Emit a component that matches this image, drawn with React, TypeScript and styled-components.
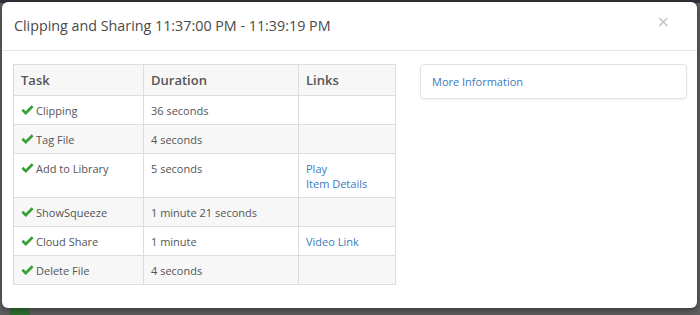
import React from "react";
import styled, { createGlobalStyle } from "styled-components";

const Global = createGlobalStyle`
  html, body { margin: 0; padding: 0; }
  body {
    width: 700px;
    height: 315px;
    overflow: hidden;
    background: #5b5b5b;
    font-family: "Open Sans", "Liberation Sans", Arial, sans-serif;
    color: #333;
  }
`;

const Backdrop = styled.div`
  position: relative;
  width: 700px;
  height: 315px;
  overflow: hidden;
  background: linear-gradient(#2e3238 0, #2e3238 3px, #5e5e5e 3px);
`;

const BehindIcon = styled.span`
  position: absolute;
  left: 10px;
  top: 308px;
  width: 20px;
  height: 14px;
  background: #2f6f32;
  border-radius: 3px;
`;

const Modal = styled.div`
  position: absolute;
  left: 2px;
  top: 2px;
  width: 695px;
  height: 306px;
  background: #fff;
  border-radius: 6px;
  box-shadow: 0 2px 6px rgba(0, 0, 0, 0.4);
  display: flex;
  flex-direction: column;
`;

const Header = styled.div`
  height: 49px;
  box-sizing: border-box;
  border-bottom: 1px solid #e5e5e5;
  display: flex;
  align-items: center;
  justify-content: space-between;
  padding: 0 27px 2px 12px;
`;

const Title = styled.h4`
  margin: 0;
  font-size: 14.3px;
  font-weight: 400;
  color: #4a4a4a;
`;

const Close = styled.span`
  font-size: 16px;
  color: #c4c4c4;
  line-height: 1;
  font-family: "DejaVu Sans", sans-serif;
  margin-top: -6px;
`;

const Body = styled.div`
  display: grid;
  grid-template-columns: 383px 267px;
  column-gap: 24px;
  padding: 13px 10px 0 11px;
  align-items: start;
`;

const Table = styled.table`
  border-collapse: collapse;
  width: 383px;
  font-size: 11px;
  border: 1px solid #ddd;
`;

const Row = styled.tr<{ $striped: boolean }>`
  background: ${(p) => (p.$striped ? "#f7f7f7" : "#fff")};
`;

const HeadCell = styled.th<{ $w?: number }>`
  text-align: left;
  font-weight: 600;
  font-size: 13px;
  color: #555;
  height: 31px;
  padding: 0 7px;
  border: 1px solid #ddd;
  width: ${(p) => (p.$w ? `${p.$w}px` : "auto")};
  box-sizing: border-box;
`;

const Cell = styled.td`
  vertical-align: top;
  padding: 7px 7px 6px 7px;
  border: 1px solid #ddd;
  color: #555;
  line-height: 15px;
  box-sizing: border-box;
`;

const TaskName = styled.div`
  display: flex;
  align-items: center;
  gap: 2px;
  height: 15px;
`;

const Link = styled.a`
  display: block;
  color: #3a7bbf;
  text-decoration: none;
`;

const Panel = styled.div`
  border: 1px solid #e3e3e3;
  border-radius: 4px;
  box-shadow: 0 1px 2px rgba(0, 0, 0, 0.06);
  height: 35px;
  box-sizing: border-box;
  display: flex;
  align-items: center;
  padding: 0 11px 1px;
`;

const PanelLink = styled.a`
  color: #3a7bbf;
  font-size: 11px;
  text-decoration: none;
`;

const Check = () => (
  <svg width="13" height="11" viewBox="0 0 12 10" aria-hidden="true">
    <path d="M0.4 5.2 L2.2 3.4 L4.4 5.6 L9.8 0.2 L11.6 2 L4.4 9.2 Z" fill="#35a035" />
  </svg>
);

type Task = { name: string; duration: string; links: string[] };

const tasks: Task[] = [
  { name: "Clipping", duration: "36 seconds", links: [] },
  { name: "Tag File", duration: "4 seconds", links: [] },
  { name: "Add to Library", duration: "5 seconds", links: ["Play", "Item Details"] },
  { name: "ShowSqueeze", duration: "1 minute 21 seconds", links: [] },
  { name: "Cloud Share", duration: "1 minute", links: ["Video Link"] },
  { name: "Delete File", duration: "4 seconds", links: [] },
];

export default function App() {
  return (
    <>
      <Global />
      <Backdrop>
        <BehindIcon />
        <Modal>
          <Header>
            <Title>Clipping and Sharing 11:37:00 PM - 11:39:19 PM</Title>
            <Close>×</Close>
          </Header>
          <Body>
            <Table>
              <tbody>
                <Row $striped>
                  <HeadCell $w={130}>Task</HeadCell>
                  <HeadCell $w={155}>Duration</HeadCell>
                  <HeadCell>Links</HeadCell>
                </Row>
                {tasks.map((t, i) => (
                  <Row key={t.name} $striped={i % 2 === 1}>
                    <Cell>
                      <TaskName>
                        <Check />
                        {t.name}
                      </TaskName>
                    </Cell>
                    <Cell>{t.duration}</Cell>
                    <Cell>
                      {t.links.map((l) => (
                        <Link key={l} href="#">
                          {l}
                        </Link>
                      ))}
                    </Cell>
                  </Row>
                ))}
              </tbody>
            </Table>
            <Panel>
              <PanelLink href="#">More Information</PanelLink>
            </Panel>
          </Body>
        </Modal>
      </Backdrop>
    </>
  );
}
